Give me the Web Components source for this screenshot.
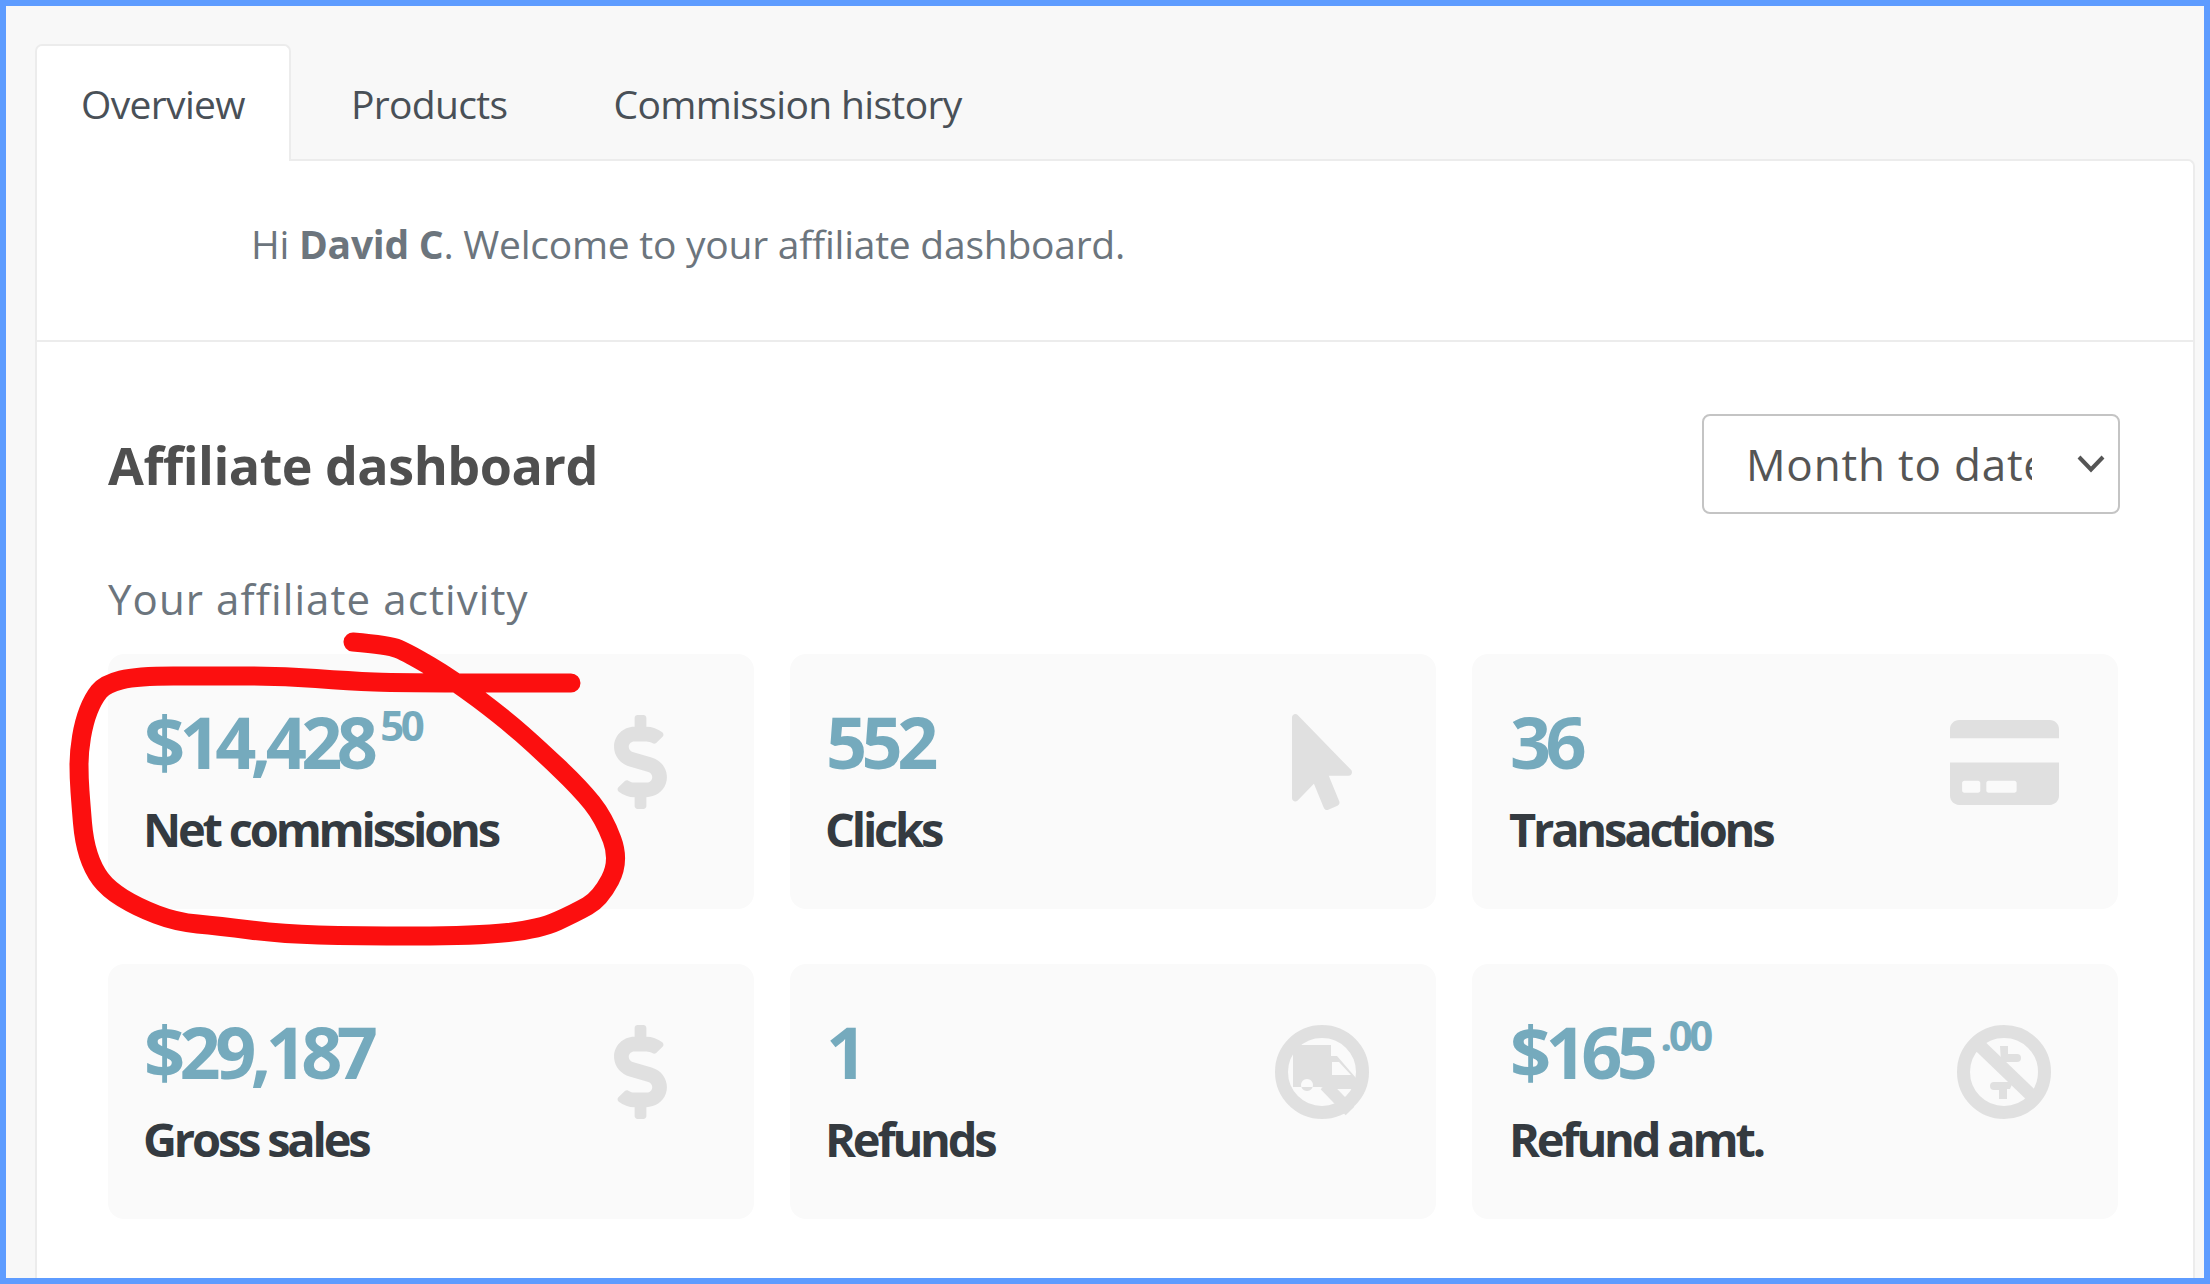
<!DOCTYPE html>
<html>
<head>
<meta charset="utf-8">
<title>Affiliate dashboard</title>
<style>
    html, body { margin: 0; padding: 0; background: #5e9cff; }
    body { font-family: "Open Sans", "Liberation Sans", sans-serif; overflow: hidden; }
</style>
</head>
<body>
<affiliate-page>
    <tab-bar>
        <tab-item active>Overview</tab-item>
        <tab-item>Products</tab-item>
        <tab-item>Commission history</tab-item>
    </tab-bar>
    <dash-panel>
        <welcome-bar>Hi <b>David C</b>. Welcome to your affiliate dashboard.</welcome-bar>
        <dash-header title="Affiliate dashboard" range="Month to date"></dash-header>
        <stat-grid caption="Your affiliate activity">
            <stat-card label="Net commissions" icon="dollar"><stat-value cents="50">$14,428</stat-value></stat-card>
            <stat-card label="Clicks" icon="pointer"><stat-value>552</stat-value></stat-card>
            <stat-card label="Transactions" icon="card"><stat-value>36</stat-value></stat-card>
            <stat-card label="Gross sales" icon="dollar"><stat-value>$29,187</stat-value></stat-card>
            <stat-card label="Refunds" icon="noTruck"><stat-value>1</stat-value></stat-card>
            <stat-card label="Refund amt." icon="noDollar"><stat-value cents=".00">$165</stat-value></stat-card>
        </stat-grid>
    </dash-panel>
    <red-scribble></red-scribble>
</affiliate-page>

<script>
class AffiliatePage extends HTMLElement {
    constructor() {
        super();
        this.attachShadow({ mode: 'open' }).innerHTML = `
            <style>
                :host {
                    display: flex;
                    flex-direction: column;
                    position: relative;
                    box-sizing: border-box;
                    height: 1284px;
                    border: 6px solid #5e9cff;
                    background: #f8f8f8;
                    padding: 38px 9px 0 29px;
                    overflow: hidden;
                }
            </style>
            <slot></slot>`;
    }
}

class TabBar extends HTMLElement {
    constructor() {
        super();
        this.attachShadow({ mode: 'open' }).innerHTML = `
            <style>
                :host { display: flex; gap: 14px; position: relative; z-index: 1; margin-bottom: -2px; }
            </style>
            <slot></slot>`;
    }
}

class TabItem extends HTMLElement {
    constructor() {
        super();
        this.attachShadow({ mode: 'open' }).innerHTML = `
            <style>
                :host {
                    display: block;
                    box-sizing: border-box;
                    height: 117px;
                    padding: 0 44px;
                    line-height: 115px;
                    font-size: 39px;
                    letter-spacing: -0.65px;
                    color: #495057;
                    border: 2px solid transparent;
                    border-bottom: 0;
                    border-radius: 7px 7px 0 0;
                }
                :host([active]) { background: #fff; border-color: #ececec; }
            </style>
            <slot></slot>`;
    }
}

class DashPanel extends HTMLElement {
    constructor() {
        super();
        this.attachShadow({ mode: 'open' }).innerHTML = `
            <style>
                :host {
                    display: block;
                    flex: 1;
                    background: #fff;
                    border: 2px solid #ececec;
                    border-bottom: 0;
                    border-radius: 0 7px 0 0;
                }
            </style>
            <slot></slot>`;
    }
}

class WelcomeBar extends HTMLElement {
    constructor() {
        super();
        this.attachShadow({ mode: 'open' }).innerHTML = `
            <style>
                :host {
                    display: block;
                    box-sizing: border-box;
                    height: 181px;
                    padding-left: 214px;
                    line-height: 165px;
                    font-size: 39px;
                    letter-spacing: -0.25px;
                    color: #6c757d;
                    border-bottom: 2px solid #ececec;
                }
            </style>
            <slot></slot>`;
    }
}

class DashHeader extends HTMLElement {
    constructor() {
        super();
        const root = this.attachShadow({ mode: 'open' });
        root.innerHTML = `
            <style>
                :host {
                    display: flex;
                    justify-content: space-between;
                    align-items: center;
                    margin: 72px 73px 0 71px;
                }
                h2 {
                    margin: 0;
                    font-size: 52px;
                    font-weight: 700;
                    letter-spacing: -0.5px;
                    color: #4f4f4f;
                }
                .range {
                    display: flex;
                    align-items: center;
                    box-sizing: border-box;
                    width: 418px;
                    height: 100px;
                    padding: 0 13px 0 42px;
                    border: 2px solid #c4c4c4;
                    border-radius: 8px;
                    font-size: 44px;
                    letter-spacing: 0.8px;
                    color: #555;
                }
                .range span { width: 286px; overflow: hidden; white-space: nowrap; }
                .range svg { margin-left: auto; }
            </style>
            <h2></h2>
            <div class="range">
                <span></span>
                <svg width="28" height="18" viewBox="0 0 28 18"><path d="M2 2l12 12.500L26 2" fill="none" stroke="#555" stroke-width="4"/></svg>
            </div>`;
        root.querySelector('h2').textContent = this.getAttribute('title');
        root.querySelector('span').textContent = this.getAttribute('range');
        this.removeAttribute('title');
    }
}

class StatGrid extends HTMLElement {
    constructor() {
        super();
        const root = this.attachShadow({ mode: 'open' });
        root.innerHTML = `
            <style>
                :host { display: block; margin: 60px 73px 0 71px; }
                p {
                    margin: 0 0 30px;
                    line-height: 50px;
                    font-size: 42px;
                    letter-spacing: 1.1px;
                    color: #6c757d;
                }
                .grid {
                    display: grid;
                    grid-template-columns: repeat(3, 646px);
                    grid-auto-rows: 255px;
                    column-gap: 36px;
                    row-gap: 55px;
                }
            </style>
            <p></p>
            <div class="grid"><slot></slot></div>`;
        root.querySelector('p').textContent = this.getAttribute('caption');
    }
}

class StatValue extends HTMLElement {
    constructor() {
        super();
        const root = this.attachShadow({ mode: 'open' });
        root.innerHTML = `
            <style>
                :host { display: block; margin-left: 1px; }
                sup {
                    font-size: 42px;
                    line-height: 0;
                    vertical-align: 28px;
                    letter-spacing: -3.500px;
                    margin-left: 8px;
                }
            </style>
            <slot></slot>${this.hasAttribute('cents') ? `<sup>${this.getAttribute('cents')}</sup>` : ''}`;
    }
}

const ICONS = {
    dollar: `<svg width="53" height="94" viewBox="0 0 288 512"><path d="M209.2 233.4l-108-31.6C88.7 198.2 80 186.5 80 173.5c0-16.3 13.2-29.5 29.5-29.5h66.3c12.2 0 24.2 3.7 34.2 10.5 6.1 4.1 14.3 3.1 19.5-2l34.8-34c7.1-6.9 6.1-18.4-1.8-24.5C238 74.8 207.4 64.1 176 64V16c0-8.8-7.2-16-16-16h-32c-8.8 0-16 7.2-16 16v48h-2.5C45.8 64-5.4 118.7.5 183.6c4.2 46.1 39.4 83.6 83.8 96.6l102.5 30c12.5 3.7 21.2 15.3 21.2 28.3 0 16.3-13.2 29.5-29.5 29.5h-66.3C100 368 88 364.3 78 357.5c-6.1-4.1-14.3-3.1-19.5 2l-34.8 34c-7.1 6.9-6.1 18.4 1.8 24.5 24.5 19.2 55.1 29.9 86.5 30v48c0 8.8 7.2 16 16 16h32c8.8 0 16-7.2 16-16v-48.2c46.6-.9 90.3-28.6 105.7-72.7 21.5-61.6-14.6-124.8-74.5-141.7z"/></svg>`,
    pointer: `<svg width="60" height="96" viewBox="0 0 320 512"><path d="M302.189 329.126H196.105l55.831 135.993c3.889 9.428-.555 19.999-9.444 23.999l-49.165 21.427c-9.165 4-19.443-.571-23.332-9.714l-53.053-129.136-86.664 89.138C18.729 472.71 0 463.554 0 447.977V18.299C0 1.899 19.921-6.096 30.277 5.443l284.412 292.542c11.472 11.179 3.007 31.141-12.5 31.141z"/></svg>`,
    card: `<svg width="109" height="85" viewBox="0 32 576 448"><path d="M0 432c0 26.500 21.500 48 48 48h480c26.500 0 48-21.500 48-48V256H0v176zm192-68c0-6.600 5.400-12 12-12h136c6.600 0 12 5.400 12 12v40c0 6.600-5.400 12-12 12H204c-6.600 0-12-5.400-12-12v-40zm-128 0c0-6.600 5.400-12 12-12h72c6.600 0 12 5.400 12 12v40c0 6.600-5.400 12-12 12H76c-6.600 0-12-5.400-12-12v-40zM576 80v48H0V80c0-26.500 21.500-48 48-48h480c26.500 0 48 21.500 48 48z"/></svg>`,
    noTruck: `<svg width="94" height="94" viewBox="0 0 94 94">
        <circle cx="47" cy="47" r="40.500" fill="none" stroke="currentColor" stroke-width="13"/>
        <path fill-rule="evenodd" d="M18 20h38v11h6l19 22v11H56L45 62H18zM57 37v13h19L64 37zM32 54a6 6 0 1 0 .01 0z"/>
        <path d="M50 60L75 86" stroke="currentColor" stroke-width="12"/>
    </svg>`,
    noDollar: `<svg width="94" height="94" viewBox="0 0 94 94">
        <circle cx="47" cy="47" r="40.500" fill="none" stroke="currentColor" stroke-width="13"/>
        <path d="M22 20L74 70" stroke="currentColor" stroke-width="13"/>
        <path d="M43 21h8v8h9a4 4 0 0 1 0 8H44zM37 57h19l-3 7h-3v10h-8V65h-5a4 4 0 0 1 0-8z"/>
    </svg>`
};

class StatCard extends HTMLElement {
    constructor() {
        super();
        const root = this.attachShadow({ mode: 'open' });
        root.innerHTML = `
            <style>
                :host {
                    display: flex;
                    justify-content: space-between;
                    box-sizing: border-box;
                    padding: 42px 54px 0 35px;
                    background: #fafafa;
                    border-radius: 16px;
                }
                :host(:nth-child(3n)) { padding-left: 37px; }
                .value {
                    line-height: 90px;
                    font-size: 72px;
                    font-weight: 700;
                    letter-spacing: -5.600px;
                    color: #75aabd;
                }
                .label {
                    margin-top: 13px;
                    line-height: 60px;
                    font-size: 47px;
                    font-weight: 700;
                    letter-spacing: -3.200px;
                    color: #343a40;
                }
                .icon {
                    display: flex;
                    justify-content: center;
                    align-items: center;
                    width: 120px;
                    height: 128px;
                    margin-top: 2px;
                    color: #e0e0e0;
                    fill: currentColor;
                }
            </style>
            <div>
                <div class="value"><slot></slot></div>
                <div class="label"></div>
            </div>
            <div class="icon">${ICONS[this.getAttribute('icon')]}</div>`;
        root.querySelector('.label').textContent = this.getAttribute('label');
    }
}

class RedScribble extends HTMLElement {
    constructor() {
        super();
        const pts = [[353,642],[389,645],[408,653],[452,679],[505,719],[539,749],[580,788],[604,818],[620,861],[600,899],[575,913],[540,929],[476,936],[355,936],[282,934],[219,926],[176,922],[137,907],[108,889],[93,869],[84,841],[81,805],[79,778],[79,752],[84,722],[93,699],[105,684],[137,676],[210,676],[282,676],[350,681],[399,683],[571,683]];
        // smooth the hand drawn line through the midpoints
        let d = `M${pts[0]}`;
        for (let i = 1; i < pts.length - 1; i++) {
            const mx = (pts[i][0] + pts[i + 1][0]) / 2, my = (pts[i][1] + pts[i + 1][1]) / 2;
            d += `Q${pts[i]} ${mx},${my}`;
        }
        d += `L${pts[pts.length - 1]}`;
        this.attachShadow({ mode: 'open' }).innerHTML = `
            <style>
                :host { position: absolute; left: -6px; top: -6px; pointer-events: none; z-index: 2; }
                svg { display: block; }
            </style>
            <svg width="2210" height="1284"><path d="${d}" fill="none" stroke="#fc0f0f" stroke-width="19" stroke-linecap="round" stroke-linejoin="round"/></svg>`;
    }
}

customElements.define('affiliate-page', AffiliatePage);
customElements.define('tab-bar', TabBar);
customElements.define('tab-item', TabItem);
customElements.define('dash-panel', DashPanel);
customElements.define('welcome-bar', WelcomeBar);
customElements.define('dash-header', DashHeader);
customElements.define('stat-grid', StatGrid);
customElements.define('stat-value', StatValue);
customElements.define('stat-card', StatCard);
customElements.define('red-scribble', RedScribble);
</script>
</body>
</html>
